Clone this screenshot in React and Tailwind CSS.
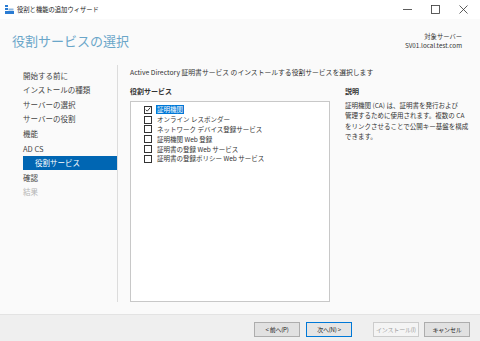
import React from 'react'

const font = { fontFamily: '"Noto Sans CJK JP", "Noto Sans", sans-serif' }

const steps = [
  { label: '開始する前に' },
  { label: 'インストールの種類' },
  { label: 'サーバーの選択' },
  { label: 'サーバーの役割' },
  { label: '機能' },
  { label: 'AD CS' },
  { label: '役割サービス', active: true },
  { label: '確認' },
  { label: '結果', disabled: true },
]

const services = [
  { label: '証明機関', checked: true, selected: true },
  { label: 'オンライン レスポンダー' },
  { label: 'ネットワーク デバイス登録サービス' },
  { label: '証明機関 Web 登録' },
  { label: '証明書の登録 Web サービス' },
  { label: '証明書の登録ポリシー Web サービス' },
]

const descLines = [
  '証明機関 (CA) は、証明書を発行および',
  '管理するために使用されます。複数の CA',
  'をリンクさせることで公開キー基盤を構成',
  'できます。',
]

const Checkbox = ({ checked }) => (
  <span className="w-[8px] h-[8px] border border-[#333] bg-white flex items-center justify-center shrink-0">
    {checked && (
      <svg width="7" height="7" viewBox="0 0 8 8">
        <path d="M1 4.2 L3 6.2 L7 1.5" fill="none" stroke="#222" strokeWidth="1.2" />
      </svg>
    )}
  </span>
)

const Button = ({ children, primary, disabled }) => (
  <div
    className={`w-[46px] h-[15px] flex items-center justify-center text-[6px] whitespace-nowrap tracking-[-0.2px] border ${
      disabled
        ? 'border-[#cccccc] bg-[#f4f4f4] text-[#a0a0a0]'
        : primary
        ? 'border-[#0078d7] bg-[#e5e5e5] text-[#222]'
        : 'border-[#adadad] bg-[#e1e1e1] text-[#222]'
    }`}
  >
    {children}
  </div>
)

export default function App() {
  return (
    <div style={font} className="w-[480px] h-[341px] flex flex-col bg-[#fafafa] text-[#333] overflow-hidden">
      {/* TITLE BAR */}
      <div className="h-[19px] bg-white flex items-center shrink-0">
        <svg width="9" height="9" viewBox="0 0 9 9" className="ml-[5px]">
          <rect x="0" y="0" width="3" height="2" fill="#2b7cd3" />
          <rect x="0" y="3" width="3" height="2" fill="#2b7cd3" />
          <rect x="0" y="6" width="9" height="3" fill="#2b7cd3" />
          <rect x="3.5" y="3.5" width="5" height="2" fill="#8fb8e0" />
        </svg>
        <span className="ml-[3px] text-[6.3px] text-[#222]">役割と機能の追加ウィザード</span>
        <div className="ml-auto flex items-center h-full">
          <div className="w-[28px] h-full flex items-center justify-center">
            <svg width="9" height="9" viewBox="0 0 9 9"><path d="M0 4.5 H9" stroke="#333" strokeWidth="0.8" /></svg>
          </div>
          <div className="w-[28px] h-full flex items-center justify-center">
            <svg width="9" height="9" viewBox="0 0 9 9"><rect x="0.5" y="0.5" width="8" height="8" fill="none" stroke="#333" strokeWidth="0.8" /></svg>
          </div>
          <div className="w-[28px] h-full flex items-center justify-center mr-[3px]">
            <svg width="9" height="9" viewBox="0 0 9 9"><path d="M0.5 0.5 L8.5 8.5 M8.5 0.5 L0.5 8.5" stroke="#333" strokeWidth="0.8" /></svg>
          </div>
        </div>
      </div>

      {/* HEADER */}
      <div className="h-[40px] flex items-center justify-between px-[12px] shrink-0">
        <h1 className="text-[13px] text-[#6aa6c9] leading-none mt-[2px]">役割サービスの選択</h1>
        <div className="text-right text-[6.3px] leading-[9px] text-[#333] mr-[6px] mt-[4px]">
          <p>対象サーバー</p>
          <p>SV01.local.test.com</p>
        </div>
      </div>

      {/* MAIN */}
      <div className="flex-1 flex min-h-0">
        {/* SIDEBAR */}
        <div className="w-[118px] mt-[6px] mb-[12px] border-r border-[#dcdcdc] pt-[3px] shrink-0">
          {steps.map((s, i) => (
            <div
              key={i}
              className={`ml-[23px] h-[14.6px] flex items-center text-[7.5px] ${
                s.active ? 'bg-[#0066b3] text-white pl-[12px]' : s.disabled ? 'text-[#b5b5b5]' : 'text-[#444]'
              }`}
            >
              {s.label}
            </div>
          ))}
        </div>

        {/* CONTENT */}
        <div className="flex-1 pl-[12px] pt-[8px] flex flex-col min-w-0 mb-[12px]">
          <p className="text-[6.8px] leading-[10px] text-[#333]">
            Active Directory 証明書サービス のインストールする役割サービスを選択します
          </p>
          <div className="flex-1 flex mt-[9px] min-h-0">
            <div className="w-[200px] flex flex-col">
              <p className="text-[7px] font-bold leading-[10px] text-[#333]">役割サービス</p>
              <div className="flex-1 mt-[5px] bg-white border border-[#c8c8c8] pt-[3px] pl-[13px]">
                {services.map((s, i) => (
                  <div key={i} className="h-[9.8px] flex items-center gap-[4px] text-[6.5px] text-[#333]">
                    <Checkbox checked={s.checked} />
                    <span className={s.selected ? 'bg-[#0078d7] text-white px-[1px] leading-[9px]' : 'leading-[9px] px-[1px]'}>
                      {s.label}
                    </span>
                  </div>
                ))}
              </div>
            </div>
            <div className="ml-[15px] w-[130px]">
              <p className="text-[7px] font-bold leading-[10px] text-[#333]">説明</p>
              <div className="mt-[4px] text-[6.5px] leading-[10.3px] text-[#333] whitespace-nowrap">
                {descLines.map((l, i) => (
                  <p key={i}>{l}</p>
                ))}
              </div>
            </div>
          </div>
        </div>
      </div>

      {/* FOOTER */}
      <div className="h-[27px] bg-[#efefef] border-t border-[#e3e3e3] flex items-center shrink-0 pl-[254px] pt-[2px]">
        <Button>&lt; 前へ(P)</Button>
        <div className="ml-[6px]"><Button primary>次へ(N) &gt;</Button></div>
        <div className="ml-[21px]"><Button disabled>インストール(I)</Button></div>
        <div className="ml-[5px]"><Button>キャンセル</Button></div>
      </div>
    </div>
  )
}
